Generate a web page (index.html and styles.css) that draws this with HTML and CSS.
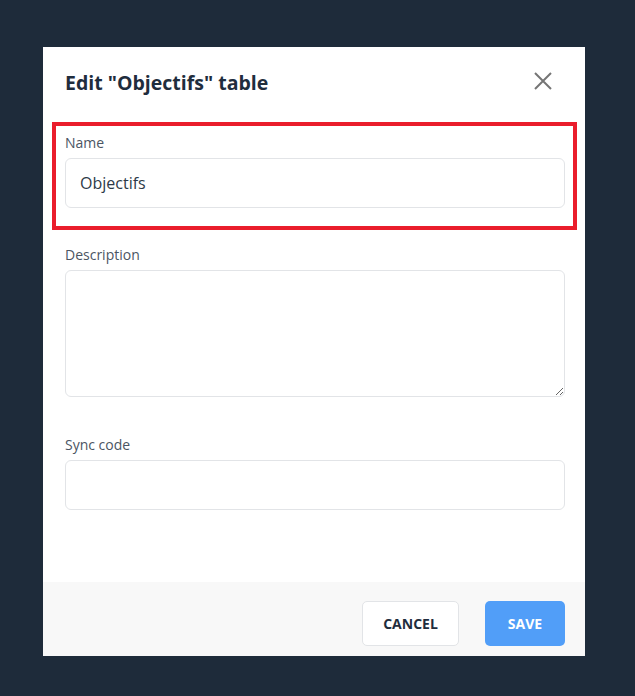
FILE: index.html
```html
<!DOCTYPE html>
<html lang="en">
<head>
    <meta charset="UTF-8">
    <meta name="viewport" content="width=device-width, initial-scale=1.0">
    <title>Edit table</title>
    <link rel="stylesheet" href="styles.css">
</head>
<body>
    <div class="modal">
        <div class="modal-header">
            <h2>Edit "Objectifs" table</h2>
            <button class="close" aria-label="Close">
                <svg width="18" height="18" viewBox="0 0 18 18">
                    <path d="M1 1L17 17M17 1L1 17" stroke="#757575" stroke-width="2" fill="none"/>
                </svg>
            </button>
        </div>

        <div class="modal-body">
            <div class="field highlight">
                <label for="tableName">Name</label>
                <input type="text" id="tableName" value="Objectifs">
            </div>

            <div class="field">
                <label for="tableDescription">Description</label>
                <textarea id="tableDescription"></textarea>
            </div>

            <div class="field">
                <label for="syncCode">Sync code</label>
                <input type="text" id="syncCode">
            </div>
        </div>

        <div class="modal-footer">
            <button class="btn btn-cancel">Cancel</button>
            <button class="btn btn-save">Save</button>
        </div>
    </div>
</body>
</html>
```

FILE: styles.css
```css
body {
    margin: 0;
    font-family: "Open Sans", "Noto Sans", sans-serif;
    background-color: #1e2b3a;
    color: #1f2d3d;
}
.modal {
    width: 542px;
    height: 609px;
    margin: 47px 0 0 43px;
    background: white;
    display: flex;
    flex-direction: column;
}
.modal-header {
    display: flex;
    justify-content: space-between;
    align-items: flex-start;
    padding: 23px 33px 0 22px;
    height: 47px;
}
.modal-header h2 {
    margin: 0;
    font-size: 19.5px;
    line-height: 26px;
    font-weight: 700;
    color: #1f2d3d;
}
.close {
    border: none;
    background: none;
    padding: 0;
    margin-top: 2px;
    width: 18px;
    height: 18px;
    cursor: pointer;
}
.modal-body {
    flex: 1;
    padding: 5px 20px 0 22px;
}
.field {
    margin-bottom: 38px;
}
.field.highlight {
    margin: 0 -12px 15px -13px;
    padding: 7px 8px 18px 9px;
    border: 4px solid #ea1d2c;
}
label {
    display: block;
    font-size: 14px;
    line-height: 20px;
    color: #4b5563;
    margin-bottom: 5px;
}
input[type="text"],
textarea {
    display: block;
    box-sizing: border-box;
    width: 100%;
    border: 1px solid #e2e4e7;
    border-radius: 6px;
    font-family: inherit;
    font-size: 16px;
    color: #2d3a48;
    padding: 0 14px;
    outline: none;
}
input[type="text"] {
    height: 50px;
}
textarea {
    height: 127px;
    margin-top: 1px;
    padding: 10px 14px;
}
.modal-footer {
    background-color: #f8f8f8;
    display: flex;
    justify-content: flex-end;
    gap: 26px;
    padding: 19px 20px 10px;
}
.btn {
    height: 45px;
    border-radius: 5px;
    font-family: inherit;
    font-size: 14px;
    font-weight: 700;
    text-transform: uppercase;
    cursor: pointer;
}
.btn-cancel {
    width: 97px;
    background: white;
    border: 1px solid #e2e4e7;
    color: #1f2d3d;
}
.btn-save {
    width: 80px;
    background-color: #519ef8;
    border: none;
    color: white;
}
```
